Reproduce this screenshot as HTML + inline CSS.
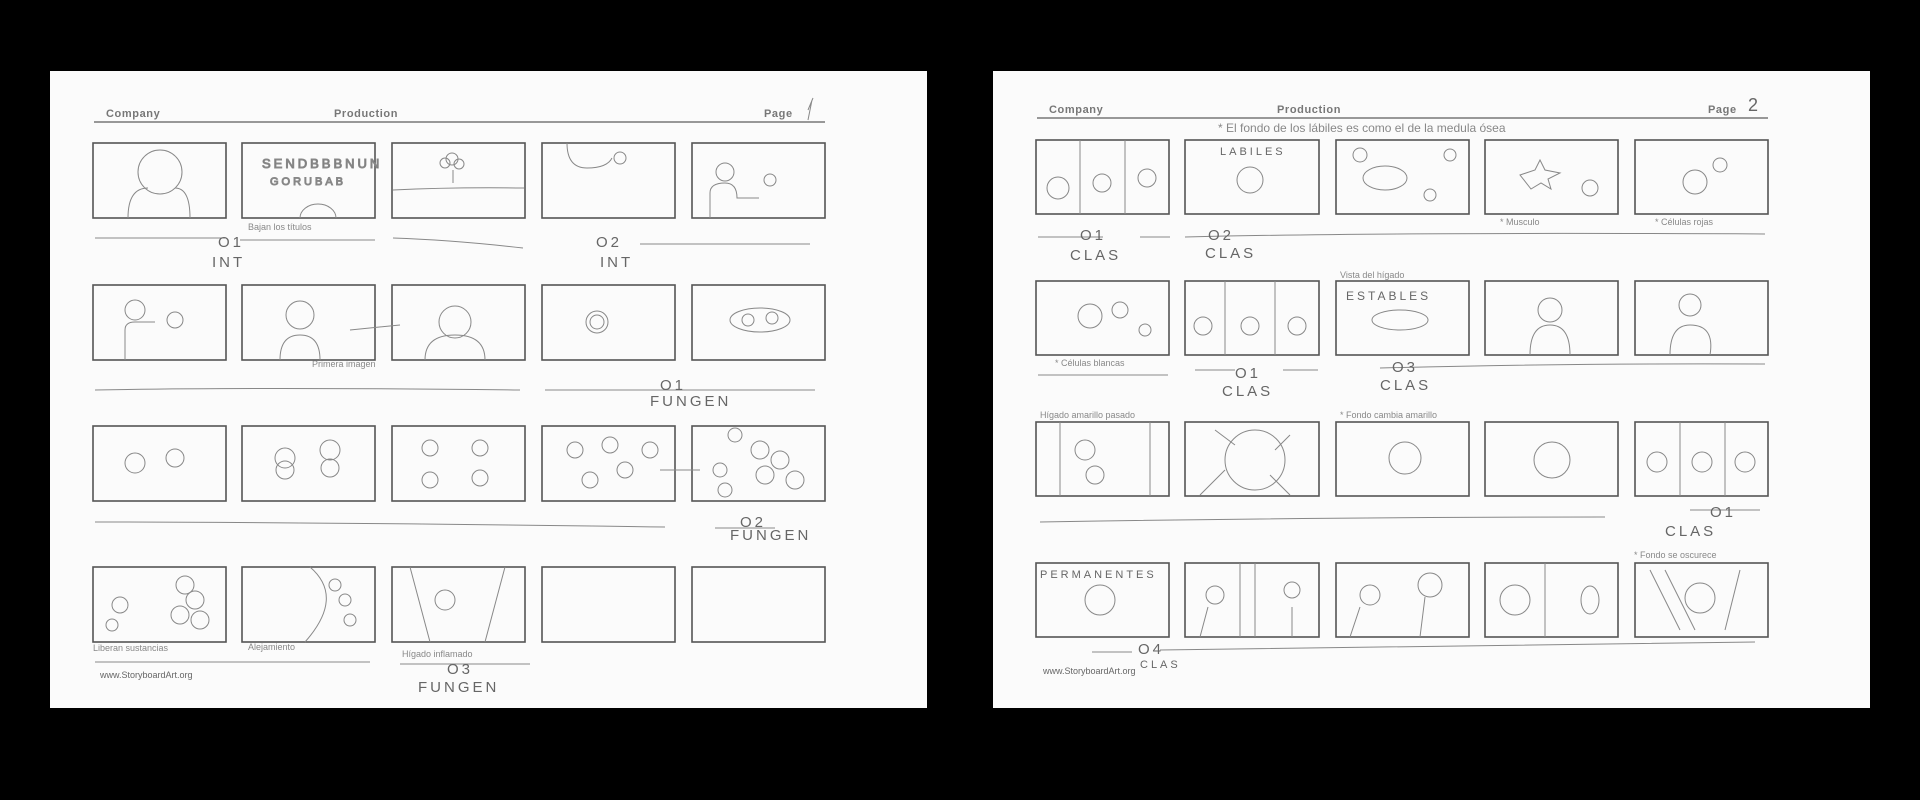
<!DOCTYPE html>
<html><head><meta charset="utf-8"><style>
html,body{margin:0;padding:0;background:#000;width:1920px;height:800px;overflow:hidden}
svg{display:block}
.h{font-family:"Liberation Sans",sans-serif;font-size:11px;font-weight:bold;fill:#777;letter-spacing:0.6px}
.f{font-family:"Liberation Sans",sans-serif;font-size:9px;fill:#666}
.hw{font-family:"Liberation Sans",sans-serif;font-size:15px;fill:#666;letter-spacing:3px}
.sm{font-family:"Liberation Sans",sans-serif;font-size:9px;fill:#888}
rect.fr{fill:none;stroke:#555;stroke-width:1.6}
.sk{fill:none;stroke:#888;stroke-width:1}
</style></head><body>
<svg width="1920" height="800" viewBox="0 0 1920 800">
<rect x="0" y="0" width="1920" height="800" fill="#000"/>
<!-- left page -->
<rect x="50" y="71" width="877" height="637" fill="#fbfbfb"/>
<text class="h" x="106" y="117">Company</text>
<text class="h" x="334" y="117">Production</text>
<text class="h" x="764" y="117">Page</text>
<line x1="94" y1="122" x2="825" y2="122" stroke="#777" stroke-width="1.4"/>
<path class="sk" d="M808 110 l5 -12 M808 120 l4 -20"/>
<g>
<rect class="fr" x="93" y="143" width="133" height="75"/><rect class="fr" x="242" y="143" width="133" height="75"/><rect class="fr" x="392" y="143" width="133" height="75"/><rect class="fr" x="542" y="143" width="133" height="75"/><rect class="fr" x="692" y="143" width="133" height="75"/>
<rect class="fr" x="93" y="285" width="133" height="75"/><rect class="fr" x="242" y="285" width="133" height="75"/><rect class="fr" x="392" y="285" width="133" height="75"/><rect class="fr" x="542" y="285" width="133" height="75"/><rect class="fr" x="692" y="285" width="133" height="75"/>
<rect class="fr" x="93" y="426" width="133" height="75"/><rect class="fr" x="242" y="426" width="133" height="75"/><rect class="fr" x="392" y="426" width="133" height="75"/><rect class="fr" x="542" y="426" width="133" height="75"/><rect class="fr" x="692" y="426" width="133" height="75"/>
<rect class="fr" x="93" y="567" width="133" height="75"/><rect class="fr" x="242" y="567" width="133" height="75"/><rect class="fr" x="392" y="567" width="133" height="75"/><rect class="fr" x="542" y="567" width="133" height="75"/><rect class="fr" x="692" y="567" width="133" height="75"/>
</g>
<!-- sketches left -->
<g class="sk">
<circle cx="160" cy="172" r="22"/><path d="M128 218 q0 -30 20 -30 M190 218 q0 -30 -15 -30"/>
<text class="hw" x="262" y="168" style="font-size:13px">SENDBBBNUN</text><text class="hw" x="270" y="185" style="font-size:11px">GORUBAB</text>
<path d="M300 218 a18 14 0 0 1 36 0"/>
<circle cx="452" cy="159" r="6"/><circle cx="445" cy="163" r="5"/><circle cx="459" cy="164" r="5"/><path d="M453 170 v13 M393 190 q60 -3 131 -2"/>
<path d="M567 143 q0 25 20 25 q20 0 25 -10"/><circle cx="620" cy="158" r="6"/>
<circle cx="725" cy="172" r="9"/><path d="M710 218 v-25 q0 -10 15 -10 q12 0 12 15 h22"/><circle cx="770" cy="180" r="6"/>
<circle cx="135" cy="310" r="10"/><path d="M125 360 v-30 q0 -8 10 -8 h20"/><circle cx="175" cy="320" r="8"/>
<circle cx="300" cy="315" r="14"/><path d="M280 360 q0 -25 20 -25 q20 0 20 25"/>
<circle cx="455" cy="322" r="16"/><path d="M425 360 q0 -25 30 -25 q30 0 30 25 M350 330 l50 -5"/>
<circle cx="597" cy="322" r="11"/><circle cx="597" cy="322" r="7"/>
<ellipse cx="760" cy="320" rx="30" ry="12"/><circle cx="748" cy="320" r="6"/><circle cx="772" cy="318" r="6"/>
<circle cx="135" cy="463" r="10"/><circle cx="175" cy="458" r="9"/>
<circle cx="285" cy="458" r="10"/><circle cx="285" cy="470" r="9"/><circle cx="330" cy="450" r="10"/><circle cx="330" cy="468" r="9"/>
<circle cx="430" cy="448" r="8"/><circle cx="480" cy="448" r="8"/><circle cx="430" cy="480" r="8"/><circle cx="480" cy="478" r="8"/>
<circle cx="575" cy="450" r="8"/><circle cx="610" cy="445" r="8"/><circle cx="625" cy="470" r="8"/><circle cx="590" cy="480" r="8"/><circle cx="650" cy="450" r="8"/><path d="M660 470 h40"/>
<circle cx="735" cy="435" r="7"/><circle cx="760" cy="450" r="9"/><circle cx="780" cy="460" r="9"/><circle cx="765" cy="475" r="9"/><circle cx="795" cy="480" r="9"/><circle cx="720" cy="470" r="7"/><circle cx="725" cy="490" r="7"/>
<circle cx="120" cy="605" r="8"/><circle cx="112" cy="625" r="6"/><circle cx="185" cy="585" r="9"/><circle cx="195" cy="600" r="9"/><circle cx="180" cy="615" r="9"/><circle cx="200" cy="620" r="9"/>
<path d="M310 567 q35 30 -5 75"/><circle cx="335" cy="585" r="6"/><circle cx="345" cy="600" r="6"/><circle cx="350" cy="620" r="6"/>
<path d="M410 567 l20 75 M505 567 l-20 75"/><circle cx="445" cy="600" r="10"/>
<path d="M95 238 h130 M240 240 h135 M393 238 q60 2 130 10 M640 244 h170 M95 390 q160 -3 425 0 M545 390 h270 M95 522 q200 0 570 5 M715 528 l60 0 M95 662 h275 M400 664 h130"/>
</g>
<text class="hw" x="218" y="247">O1</text><text class="hw" x="212" y="267">INT</text>
<text class="hw" x="596" y="247">O2</text><text class="hw" x="600" y="267">INT</text>
<text class="hw" x="660" y="390">O1</text><text class="hw" x="650" y="406">FUNGEN</text>
<text class="hw" x="740" y="527">O2</text><text class="hw" x="730" y="540">FUNGEN</text>
<text class="hw" x="447" y="674">O3</text><text class="hw" x="418" y="692">FUNGEN</text>
<text class="sm" x="248" y="230">Bajan los títulos</text><text class="sm" x="312" y="367">Primera imagen</text>
<text class="sm" x="93" y="651">Liberan sustancias</text><text class="sm" x="248" y="650">Alejamiento</text><text class="sm" x="402" y="657">Hígado inflamado</text>
<text class="f" x="100" y="678">www.StoryboardArt.org</text>
<!-- right page -->
<rect x="993" y="71" width="877" height="637" fill="#fbfbfb"/>
<text class="h" x="1049" y="113">Company</text>
<text class="h" x="1277" y="113">Production</text>
<text class="h" x="1708" y="113">Page</text>
<text class="hw" x="1748" y="111" style="font-size:18px">2</text>
<line x1="1037" y1="118" x2="1768" y2="118" stroke="#777" stroke-width="1.4"/>
<text class="sm" x="1218" y="132" style="font-size:12px">* El fondo de los lábiles es como el de la medula ósea</text>
<g>
<rect class="fr" x="1036" y="140" width="133" height="74"/><rect class="fr" x="1185" y="140" width="134" height="74"/><rect class="fr" x="1336" y="140" width="133" height="74"/><rect class="fr" x="1485" y="140" width="133" height="74"/><rect class="fr" x="1635" y="140" width="133" height="74"/>
<rect class="fr" x="1036" y="281" width="133" height="74"/><rect class="fr" x="1185" y="281" width="134" height="74"/><rect class="fr" x="1336" y="281" width="133" height="74"/><rect class="fr" x="1485" y="281" width="133" height="74"/><rect class="fr" x="1635" y="281" width="133" height="74"/>
<rect class="fr" x="1036" y="422" width="133" height="74"/><rect class="fr" x="1185" y="422" width="134" height="74"/><rect class="fr" x="1336" y="422" width="133" height="74"/><rect class="fr" x="1485" y="422" width="133" height="74"/><rect class="fr" x="1635" y="422" width="133" height="74"/>
<rect class="fr" x="1036" y="563" width="133" height="74"/><rect class="fr" x="1185" y="563" width="134" height="74"/><rect class="fr" x="1336" y="563" width="133" height="74"/><rect class="fr" x="1485" y="563" width="133" height="74"/><rect class="fr" x="1635" y="563" width="133" height="74"/>
</g>
<g class="sk">
<path d="M1080 140 v74 M1125 140 v74"/><circle cx="1058" cy="188" r="11"/><circle cx="1102" cy="183" r="9"/><circle cx="1147" cy="178" r="9"/>
<circle cx="1250" cy="180" r="13"/><circle cx="1360" cy="155" r="7"/><ellipse cx="1385" cy="178" rx="22" ry="12"/><circle cx="1450" cy="155" r="6"/><circle cx="1430" cy="195" r="6"/>
<path d="M1520 175 l15 -5 l5 -10 l5 10 l15 3 l-12 6 l3 10 l-10 -6 l-10 6 z"/><circle cx="1590" cy="188" r="8"/>
<circle cx="1695" cy="182" r="12"/><circle cx="1720" cy="165" r="7"/>
<circle cx="1090" cy="316" r="12"/><circle cx="1120" cy="310" r="8"/><circle cx="1145" cy="330" r="6"/>
<path d="M1225 281 v74 M1275 281 v74"/><circle cx="1203" cy="326" r="9"/><circle cx="1250" cy="326" r="9"/><circle cx="1297" cy="326" r="9"/>
<ellipse cx="1400" cy="320" rx="28" ry="10"/>
<circle cx="1550" cy="310" r="12"/><path d="M1530 355 q0 -30 20 -30 q20 0 20 30"/>
<circle cx="1690" cy="305" r="11"/><path d="M1670 355 q0 -30 20 -30 q25 0 20 30"/>
<path d="M1060 422 v74 M1150 422 v74"/><circle cx="1085" cy="450" r="10"/><circle cx="1095" cy="475" r="9"/>
<circle cx="1255" cy="460" r="30"/><path d="M1215 430 l20 15 M1290 435 l-15 15 M1200 495 l25 -25 M1290 495 l-20 -20"/>
<circle cx="1405" cy="458" r="16"/><circle cx="1552" cy="460" r="18"/>
<path d="M1680 422 v74 M1725 422 v74"/><circle cx="1657" cy="462" r="10"/><circle cx="1702" cy="462" r="10"/><circle cx="1745" cy="462" r="10"/>
<circle cx="1100" cy="600" r="15"/>
<path d="M1240 563 v74 M1255 563 v74"/><circle cx="1215" cy="595" r="9"/><path d="M1200 637 l8 -30 M1292 637 v-30"/><circle cx="1292" cy="590" r="8"/>
<circle cx="1370" cy="595" r="10"/><circle cx="1430" cy="585" r="12"/><path d="M1350 637 l10 -30 M1420 637 l5 -40"/>
<circle cx="1515" cy="600" r="15"/><path d="M1545 563 v74"/><ellipse cx="1590" cy="600" rx="9" ry="14"/>
<circle cx="1700" cy="598" r="15"/><path d="M1650 570 l30 60 M1665 570 l30 60 M1740 570 l-15 60"/>
<path d="M1038 237 h65 M1140 237 h30 M1185 237 q200 -5 580 -3 M1038 375 h130 M1195 370 h40 M1283 370 h35 M1380 368 q200 -5 385 -4 M1040 522 q300 -5 565 -5 M1690 510 h70 M1092 652 h40 M1160 650 q300 -5 595 -8"/>
</g>
<text class="hw" x="1080" y="240">O1</text><text class="hw" x="1070" y="260">CLAS</text>
<text class="hw" x="1208" y="240">O2</text><text class="hw" x="1205" y="258">CLAS</text>
<text class="hw" x="1235" y="378">O1</text><text class="hw" x="1222" y="396">CLAS</text>
<text class="hw" x="1392" y="372">O3</text><text class="hw" x="1380" y="390">CLAS</text>
<text class="hw" x="1710" y="517">O1</text><text class="hw" x="1665" y="536">CLAS</text>
<text class="hw" x="1138" y="654">O4</text><text class="hw" x="1140" y="668" style="font-size:11px">CLAS</text>
<text class="hw" x="1220" y="155" style="font-size:11px">LABILES</text>
<text class="hw" x="1346" y="300" style="font-size:12px">ESTABLES</text>
<text class="hw" x="1040" y="578" style="font-size:11px">PERMANENTES</text>
<text class="sm" x="1340" y="278">Vista del hígado</text><text class="sm" x="1040" y="418">Hígado amarillo pasado</text><text class="sm" x="1340" y="418">* Fondo cambia amarillo</text><text class="sm" x="1634" y="558">* Fondo se oscurece</text>
<text class="sm" x="1500" y="225">* Musculo</text><text class="sm" x="1655" y="225">* Células rojas</text><text class="sm" x="1055" y="366">* Células blancas</text>
<text class="f" x="1043" y="674">www.StoryboardArt.org</text>
</svg>
</body></html>
